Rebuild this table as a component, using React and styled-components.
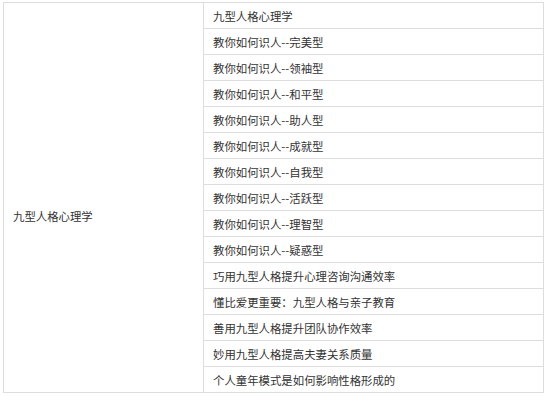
import React from 'react';
import styled, { createGlobalStyle } from 'styled-components';

const GlobalStyle = createGlobalStyle`
  body {
    margin: 0;
    background: #fff;
    font-family: "Noto Sans CJK SC", "Liberation Sans", sans-serif;
  }
`;

const Wrapper = styled.div`
  padding: 2px 0 0 3px;
`;

const Table = styled.table`
  border-collapse: collapse;
  width: 541px;
  table-layout: fixed;
  color: #333;
  font-size: 11.4px;
`;

const GroupCell = styled.td`
  width: 200px;
  border: 1px solid #ddd;
  padding: 36px 0 0 9px;
  vertical-align: middle;
  box-sizing: border-box;
`;

const Cell = styled.td`
  height: 26px;
  border: 1px solid #ddd;
  padding: 0 0 0 9px;
  box-sizing: border-box;
  vertical-align: middle;
  white-space: nowrap;
`;

const lessons = [
  '九型人格心理学',
  '教你如何识人--完美型',
  '教你如何识人--领袖型',
  '教你如何识人--和平型',
  '教你如何识人--助人型',
  '教你如何识人--成就型',
  '教你如何识人--自我型',
  '教你如何识人--活跃型',
  '教你如何识人--理智型',
  '教你如何识人--疑惑型',
  '巧用九型人格提升心理咨询沟通效率',
  '懂比爱更重要：九型人格与亲子教育',
  '善用九型人格提升团队协作效率',
  '妙用九型人格提高夫妻关系质量',
  '个人童年模式是如何影响性格形成的',
];

export default function App() {
  return (
    <Wrapper>
      <GlobalStyle />
      <Table>
        <tbody>
          {lessons.map((lesson, i) => (
            <tr key={lesson}>
              {i === 0 && <GroupCell rowSpan={lessons.length}>九型人格心理学</GroupCell>}
              <Cell>{lesson}</Cell>
            </tr>
          ))}
        </tbody>
      </Table>
    </Wrapper>
  );
}
